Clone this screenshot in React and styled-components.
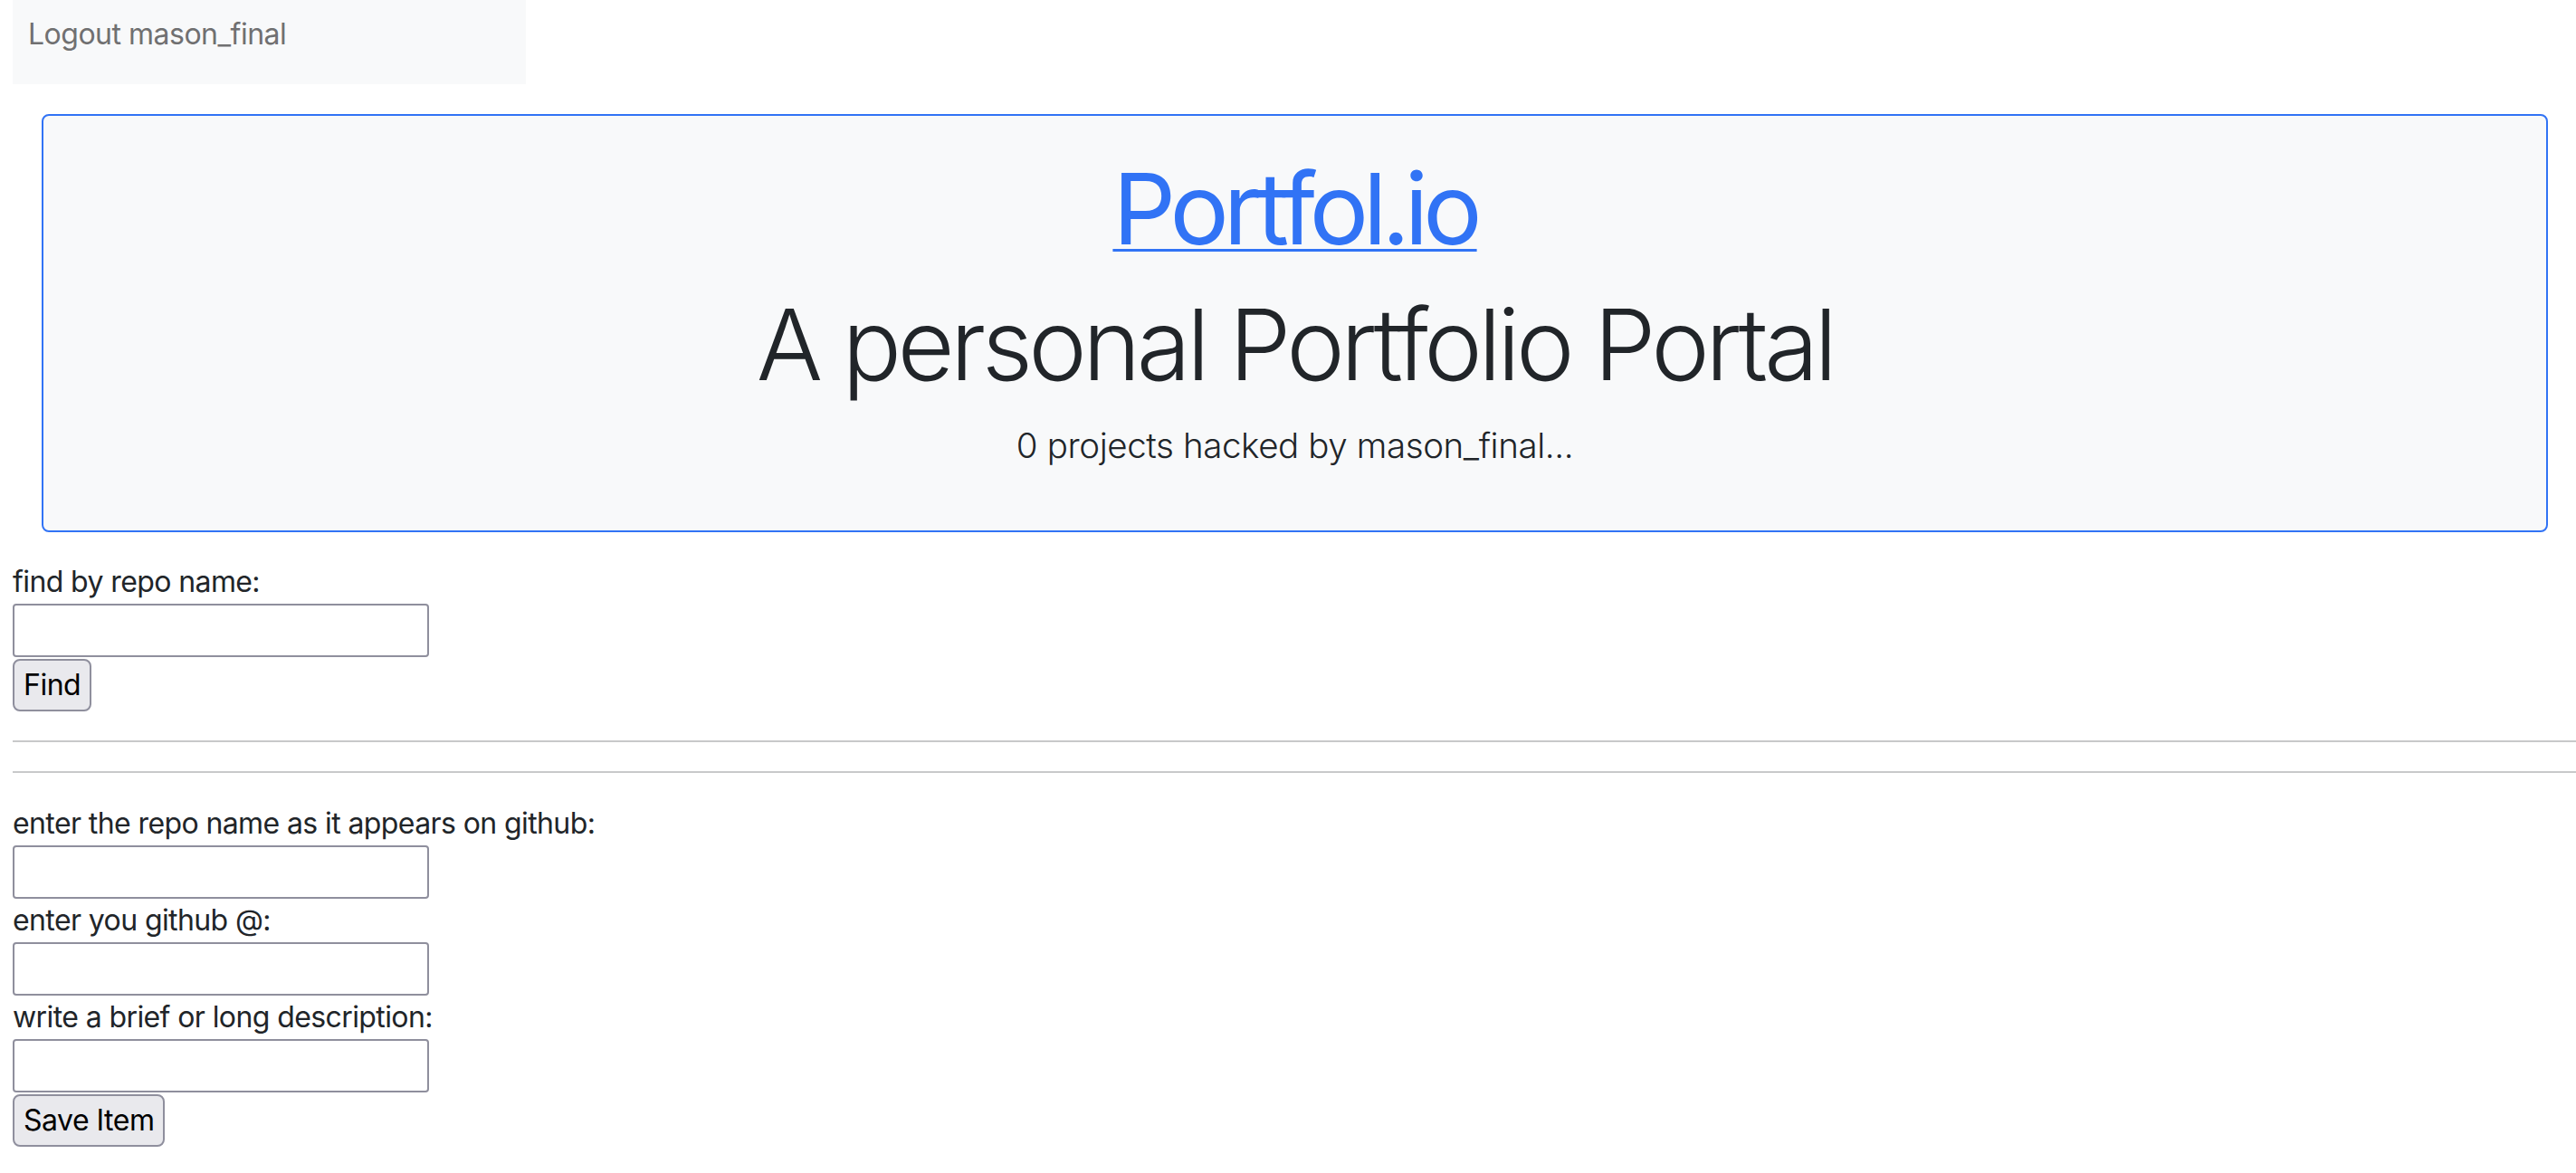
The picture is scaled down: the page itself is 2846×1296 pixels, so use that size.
import React from 'react';
import styled, { createGlobalStyle } from 'styled-components';

const GlobalStyle = createGlobalStyle`
  html, body {
    margin: 0;
    padding: 0;
    background: #fff;
  }
  body {
    font-family: Inter, "Noto Sans", sans-serif;
    color: #212529;
  }
  * {
    box-sizing: border-box;
  }
`;

const Page = styled.div`
  padding-left: 14px;
  padding-bottom: 24px;
`;

const Nav = styled.nav`
  width: 567px;
  background: #f8f9fa;
  padding: 14px 0 31px 17px;
`;

const NavLink = styled.a`
  display: block;
  font-size: 32px;
  line-height: 48px;
  letter-spacing: -0.5px;
  color: #707071;
  text-decoration: none;
`;

const Hero = styled.header`
  margin: 33px 31px 31px 32px;
  background: #f8f9fa;
  border: 2px solid #3173f5;
  border-radius: 8px;
  padding: 37px 16px 65px;
  display: flex;
  flex-direction: column;
  align-items: center;
  text-align: center;
`;

const Brand = styled.a`
  font-size: 109px;
  line-height: 130px;
  font-weight: 400;
  letter-spacing: -6px;
  color: #3173f5;
  text-decoration: underline;
  text-decoration-thickness: 3px;
  text-underline-offset: 5px;
`;

const Title = styled.h1`
  margin: 20px 0 0;
  font-size: 109px;
  line-height: 130px;
  font-weight: 300;
  letter-spacing: -4.6px;
  color: #212529;
`;

const Lead = styled.p`
  margin: 18px 0 0;
  font-size: 38.5px;
  line-height: 58px;
  font-weight: 300;
  letter-spacing: -0.4px;
  color: #212529;
`;

const Form = styled.form`
  display: block;
`;

const Label = styled.label`
  display: block;
  font-size: 32px;
  line-height: 48px;
  letter-spacing: -0.6px;
  color: #212529;
`;

const Input = styled.input`
  display: block;
  width: 460px;
  height: 59px;
  margin: 0;
  padding: 0 8px;
  border: 2px solid #8f8f9d;
  border-radius: 4px;
  background: #fff;
  font-family: Inter, sans-serif;
  font-size: 26px;
`;

const Button = styled.button`
  display: block;
  height: 58px;
  margin-top: 2px;
  padding: 0 10px;
  border: 2px solid #8f8f9d;
  border-radius: 8px;
  background: #e9e9ed;
  color: #000;
  font-family: Inter, sans-serif;
  font-size: 32px;
  letter-spacing: -0.5px;
  line-height: 1;
`;

const Rule = styled.hr`
  margin: 32px 0;
  border: 0;
  border-top: 2px solid #c8c9ca;
  height: 0;
`;

const fields = [
  { id: 'repo', label: 'enter the repo name as it appears on github:' },
  { id: 'user', label: 'enter you github @:' },
  { id: 'desc', label: 'write a brief or long description:' },
];

export default function App() {
  const user = 'mason_final';
  const projects = [];

  return (
    <Page>
      <GlobalStyle />
      <Nav>
        <NavLink href="#">Logout {user}</NavLink>
      </Nav>

      <Hero>
        <Brand href="#">Portfol.io</Brand>
        <Title>A personal Portfolio Portal</Title>
        <Lead>
          {projects.length} projects hacked by {user}...
        </Lead>
      </Hero>

      <Form onSubmit={(e) => e.preventDefault()}>
        <Label htmlFor="find">find by repo name:</Label>
        <Input id="find" type="text" />
        <Button type="submit">Find</Button>
      </Form>

      <Rule />
      <Rule />

      <Form onSubmit={(e) => e.preventDefault()}>
        {fields.map((f) => (
          <React.Fragment key={f.id}>
            <Label htmlFor={f.id}>{f.label}</Label>
            <Input id={f.id} type="text" />
          </React.Fragment>
        ))}
        <Button type="submit">Save Item</Button>
      </Form>
    </Page>
  );
}
